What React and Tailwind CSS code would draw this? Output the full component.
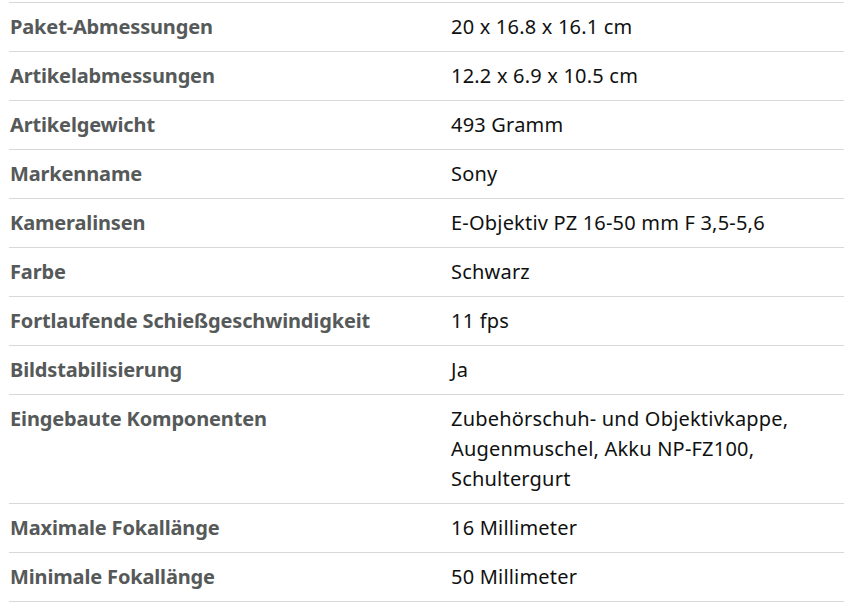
const rows = [
  ["Paket-Abmessungen", "20 x 16.8 x 16.1 cm"],
  ["Artikelabmessungen", "12.2 x 6.9 x 10.5 cm"],
  ["Artikelgewicht", "493 Gramm"],
  ["Markenname", "Sony"],
  ["Kameralinsen", "E-Objektiv PZ 16-50 mm F 3,5-5,6"],
  ["Farbe", "Schwarz"],
  ["Fortlaufende Schießgeschwindigkeit", "11 fps"],
  ["Bildstabilisierung", "Ja"],
  ["Eingebaute Komponenten", "Zubehörschuh- und Objektivkappe, Augenmuschel, Akku NP-FZ100, Schultergurt"],
  ["Maximale Fokallänge", "16 Millimeter"],
  ["Minimale Fokallänge", "50 Millimeter"],
];

export default function App() {
  return (
    <div className="w-[844px] h-[604px] bg-white overflow-hidden" style={{ fontFamily: '"Noto Sans", "Open Sans", sans-serif' }}>
      <div className="ml-[9px] mt-[2px] border-t border-[#d5d9d9]">
        {rows.map(([k, v]) => (
          <div key={k} className="flex border-b border-[#d5d9d9] py-[9px] text-[20px] leading-[30px]">
            <div className="w-[442px] shrink-0 pl-[1px] font-bold text-[#565959] tracking-[-0.15px]">{k}</div>
            <div className="w-[345px] text-[#0f1111] tracking-[0.2px]">{v}</div>
          </div>
        ))}
      </div>
    </div>
  );
}
